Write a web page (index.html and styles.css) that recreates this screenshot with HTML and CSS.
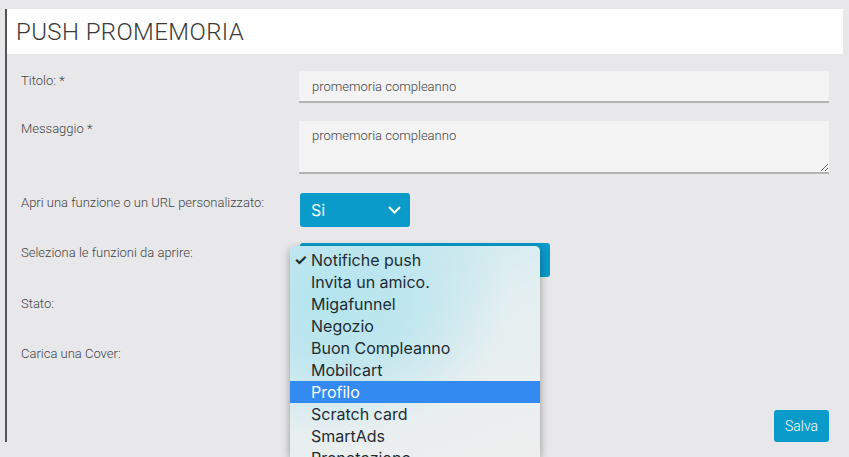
FILE: index.html
```html
<!DOCTYPE html>
<html>
<head>
	<meta charset="UTF-8">
	<meta name="viewport" content="width=device-width, initial-scale=1.0">
	<title>Push promemoria</title>
	<link rel="stylesheet" href="styles.css">
</head>
<body>
	<div class="panel">
		<div class="panel-head">
			<h1>PUSH PROMEMORIA</h1>
		</div>
		<form class="push-form">
			<div class="row row-title">
				<label class="field-label">Titolo: *</label>
				<div class="field">
					<input type="text" class="text-input" value="promemoria compleanno">
				</div>
			</div>
			<div class="row row-message">
				<label class="field-label">Messaggio *</label>
				<div class="field">
					<textarea class="text-area">promemoria compleanno</textarea>
				</div>
			</div>
			<div class="row row-open">
				<label class="field-label">Apri una funzione o un URL personalizzato:</label>
				<div class="field">
					<div class="blue-select short">
						<span>Si</span>
						<svg width="13" height="8" viewBox="0 0 13 8"><path d="M1 1l5.5 5.5L12 1" fill="none" stroke="#fff" stroke-width="2"/></svg>
					</div>
				</div>
			</div>
			<div class="row row-functions">
				<label class="field-label">Seleziona le funzioni da aprire:</label>
				<div class="field has-menu">
					<div class="blue-select wide"></div>
					<ul class="popup-menu">
						<li class="checked">Notifiche push</li>
						<li>Invita un amico.</li>
						<li>Migafunnel</li>
						<li>Negozio</li>
						<li>Buon Compleanno</li>
						<li>Mobilcart</li>
						<li class="active">Profilo</li>
						<li>Scratch card</li>
						<li>SmartAds</li>
						<li>Prenotazione</li>
					</ul>
				</div>
			</div>
			<div class="row row-state">
				<label class="field-label">Stato:</label>
			</div>
			<div class="row row-cover">
				<label class="field-label">Carica una Cover:</label>
			</div>
			<div class="actions">
				<button type="button" class="save-btn">Salva</button>
			</div>
		</form>
	</div>
</body>
</html>
```

FILE: styles.css
```css
html,
body {
	height: 100%;
}

body {
	margin: 0;
	background-color: #e8e8ea;
	font-family: Roboto, "Liberation Sans", sans-serif;
	overflow: hidden;
}

.panel {
	margin: 9px 6px 0 5px;
	border-left: 2px solid #555;
}

.panel-head {
	background-color: white;
	height: 45px;
	padding-left: 9px;
	display: flex;
	align-items: center;
}

h1 {
	margin: 0;
	font-size: 24px;
	font-weight: 300;
	color: #3a3a3a;
	letter-spacing: 0.4px;
}

.push-form {
	padding: 17px 14px 0 14px;
}

.row {
	display: flex;
	align-items: flex-start;
}

.field-label {
	width: 278px;
	flex: none;
	font-size: 13px;
	font-weight: 300;
	line-height: 16px;
	color: #444;
	padding-top: 2px;
}

.field {
	flex: 1;
}

.row-message {
	margin-top: 18px;
}

.row-message .field-label {
	padding-top: 0;
}

.row-open {
	margin-top: 19px;
}

.row-open .field-label,
.row-functions .field-label {
	padding-top: 2px;
}

.row-functions {
	margin-top: 16px;
}

.row-state {
	margin-top: 17px;
	height: 32px;
}

.row-cover {
	margin-top: 18px;
	height: 66px;
}

.text-input,
.text-area {
	display: block;
	width: 100%;
	box-sizing: border-box;
	background-color: #f3f3f3;
	border: none;
	border-bottom: 2px solid #b3b3b3;
	font-family: Roboto, "Liberation Sans", sans-serif;
	font-size: 13px;
	font-weight: 300;
	color: #444;
	padding: 0 13px;
	margin: 0;
}

.text-input {
	height: 32px;
}

.text-area {
	height: 53px;
	padding-top: 7px;
	resize: vertical;
}

.blue-select {
	background-color: #0a9bca;
	border-radius: 3px;
	height: 34px;
	display: flex;
	align-items: center;
	justify-content: space-between;
	color: white;
	font-family: Inter, "Noto Sans", sans-serif;
	font-size: 16px;
	box-sizing: border-box;
	padding: 0 9px 0 11px;
}

.blue-select.short {
	width: 110px;
	margin-left: 1px;
}

.blue-select.wide {
	width: 250px;
	margin-left: 1px;
}

.has-menu {
	position: relative;
}

.popup-menu {
	position: absolute;
	left: -9px;
	top: 3px;
	width: 250px;
	height: 208px;
	margin: 0;
	padding: 3px 0 0 0;
	list-style-type: none;
	border-radius: 5px 5px 0 0;
	box-shadow: 0 3px 10px rgba(0, 0, 0, 0.35);
	background: radial-gradient(ellipse 180px 140px at 40px 50px, #b4e5ee 0%, #bfe6ee 45%, rgba(239, 239, 239, 0) 100%),
		linear-gradient(160deg, #c3e8ef 0%, #e5eff1 45%, #eeeeee 100%);
	font-family: Inter, "Noto Sans", sans-serif;
	font-size: 16px;
	color: #1e2c33;
	overflow: hidden;
}

.popup-menu li {
	height: 22px;
	line-height: 22px;
	padding-left: 21px;
	position: relative;
}

.popup-menu li.checked::before {
	content: "\2713";
	position: absolute;
	left: 4px;
	font-size: 15px;
	font-weight: bold;
}

.popup-menu li.active {
	background-color: #338bf2;
	color: white;
}

.actions {
	display: flex;
	justify-content: flex-end;
}

.save-btn {
	width: 55px;
	height: 32px;
	background-color: #0a9bca;
	color: white;
	border: none;
	border-radius: 3px;
	font-family: Roboto, "Liberation Sans", sans-serif;
	font-size: 14px;
	font-weight: 300;
	cursor: pointer;
}
```
